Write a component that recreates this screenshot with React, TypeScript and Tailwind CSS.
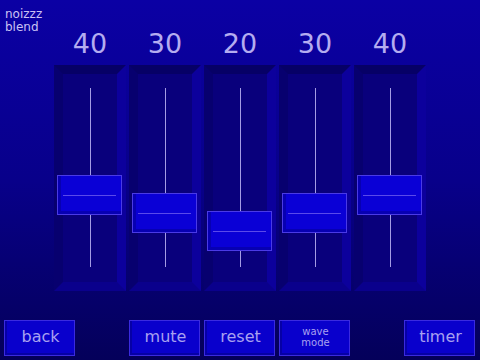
import React from 'react';

const values = [40, 30, 20, 30, 40];

const Slider = ({ value }: { value: number }) => {
  const top = 110 + (40 - value) * 1.8;
  return (
    <div className="flex flex-col items-center w-[72px]">
      <div className="h-[30px] leading-[30px] text-[27px] text-[#b4acf0]">{value}</div>
      <div className="relative mt-[6px] w-[72px] h-[226px] border-[9px] border-t-[#060066] border-l-[#07006f] border-r-[#0c009c] border-b-[#0a008c] bg-[#09007c]">
        {/* track */}
        <div className="mx-auto mt-[14px] w-px h-[179px] bg-[#a49ce4]" />
        {/* handle */}
        <div
          className="absolute left-[-6px] w-[65px] h-[40px] border border-[#4a3ae6] bg-[#0a00d6]"
          style={{ top: top - 9 }}
        >
          <div className="w-full h-full border-l-[3px] border-b-[3px] border-[#0700b2] pt-[19px] pl-[2px] pr-[5px]">
            <div className="h-px bg-[#5a4aea]" />
          </div>
        </div>
      </div>
    </div>
  );
};

const Btn = ({ children, small }: { children: React.ReactNode; small?: boolean }) => (
  <div className="w-[71px] h-[36px] border border-[#3a2ae0] bg-[#0900cc]">
    <div
      className={`w-full h-full border-l-[2px] border-b-[2px] border-[#0600a6] flex items-center justify-center text-center text-[#a8a0f0] ${
        small ? 'text-[10px] leading-[11px]' : 'text-[16px]'
      }`}
    >
      {children}
    </div>
  </div>
);

export default function App() {
  return (
    <div
      className="relative w-[480px] h-[360px] overflow-hidden bg-linear-to-b from-[#0b00a4] via-[#08008a] to-[#04005a]"
      style={{ fontFamily: '"DejaVu Sans", sans-serif' }}
    >
      <div className="absolute left-[5px] top-[8px] text-[12px] leading-[13px] text-[#cac2f4]">
        noizzz
        <br />
        blend
      </div>

      <div className="flex gap-[3px] pl-[54px] pt-[29px]">
        {values.map((v, i) => (
          <Slider key={i} value={v} />
        ))}
      </div>

      <div className="flex mt-[29px] pl-[4px]">
        <Btn>back</Btn>
        <div className="ml-[54px] flex gap-[4px]">
          <Btn>mute</Btn>
          <Btn>reset</Btn>
          <Btn small>
            wave
            <br />
            mode
          </Btn>
        </div>
        <div className="ml-[54px]">
          <Btn>timer</Btn>
        </div>
      </div>
    </div>
  );
}
